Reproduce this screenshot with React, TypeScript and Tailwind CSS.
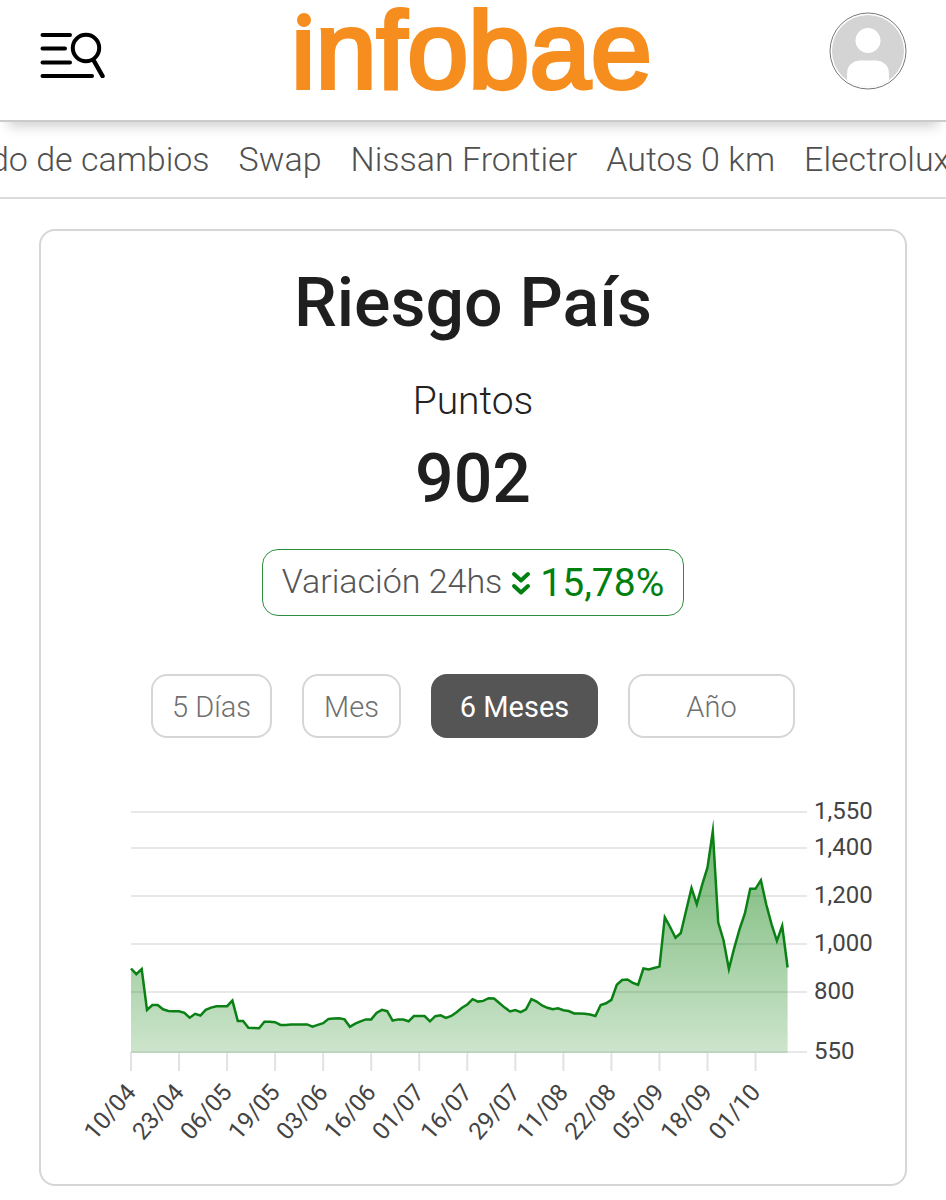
import React, { useState } from 'react';

const topics = ['Mercado de cambios', 'Swap', 'Nissan Frontier', 'Autos 0 km', 'Electrolux'];

const periods = [
    { label: '5 Días', width: 'w-[121px]' },
    { label: 'Mes', width: 'w-[99px]' },
    { label: '6 Meses', width: 'w-[167px]' },
    { label: 'Año', width: 'w-[167px]' },
];

const values = [
    898, 874, 896, 725, 746, 746, 728, 721, 720, 720, 713, 693, 709, 702, 726, 735, 741, 741,
    741, 764, 679, 679, 651, 650, 649, 676, 676, 674, 663, 662, 665, 665, 665, 665, 656, 663,
    670, 688, 689, 691, 686, 655, 668, 678, 686, 686, 713, 726, 720, 681, 686, 685, 678, 700,
    700, 700, 678, 699, 703, 692, 700, 716, 734, 748, 770, 760, 763, 774, 773, 754, 735, 719,
    725, 716, 728, 770, 760, 744, 734, 728, 732, 724, 721, 711, 711, 709, 706, 700, 746, 753,
    767, 830, 850, 852, 838, 830, 898, 894, 900, 906, 1111, 1071, 1026, 1046, 1141, 1233, 1166, 1247,
    1319, 1470, 1090, 1016, 896, 983, 1061, 1127, 1230, 1230, 1266, 1166, 1082, 1013, 1076, 902,
];

// one label every nine sessions
const dates = ['10/04', '23/04', '06/05', '19/05', '03/06', '16/06', '01/07', '16/07', '29/07', '11/08', '22/08', '05/09', '18/09', '01/10'];
const levels = [1550, 1400, 1200, 1000, 800, 550];

const LEFT = 90;
const RIGHT = 766;
const BASE = 262;
const STEP = 5.338;

const xOf = (index: number) => LEFT + index * STEP;
const yOf = (value: number) => BASE - (value - 550) * 0.24;

function MenuSearchIcon() {
    return (
        <svg width="66" height="46" viewBox="0 0 66 46" fill="none" stroke="#000" strokeWidth="4" strokeLinecap="round">
            <path d="M3.500 3H31M3.500 16.500H26M3.500 30.500H31M3.500 44H53" />
            <circle cx="47" cy="16" r="13.200" />
            <path d="M55 29L63.500 44" strokeWidth="4.500" />
        </svg>
    );
}

function Logo() {
    return (
        <svg width="360" height="92" viewBox="0 0 360 92" className="overflow-visible" role="img" aria-label="infobae">
            <text x="-2" y="88" fontFamily="'Liberation Sans', Arial, sans-serif" fontSize="110" fill="#f68e1f" stroke="#f68e1f" strokeWidth="4">infobae</text>
            {/* round dot in place of the square one */}
            <rect x="0" y="0" width="20" height="30" fill="#fff" />
            <circle cx="11" cy="20" r="7" fill="#f68e1f" />
        </svg>
    );
}

function Avatar() {
    return (
        <svg width="78" height="78" viewBox="0 0 78 78">
            <defs>
                <clipPath id="avatar">
                    <circle cx="39" cy="39" r="36" />
                </clipPath>
            </defs>
            <circle cx="39" cy="39" r="38" fill="#fff" stroke="#777" strokeWidth="1" />
            <g clipPath="url(#avatar)">
                <rect width="78" height="78" fill="#d4d4d4" />
                <circle cx="39" cy="28.500" r="12.500" fill="#fff" />
                <path d="M18 78V62C18 53 24 48.500 32 48.500H46C54 48.500 60 53 60 62V78Z" fill="#fff" />
            </g>
        </svg>
    );
}

function RiskChart() {
    const line = values.map((value, i) => `${xOf(i).toFixed(1)},${yOf(value).toFixed(1)}`).join(' L');
    const end = xOf(values.length - 1).toFixed(1);

    return (
        <svg viewBox="0 0 864 394" className="block w-full" fontFamily="Roboto, sans-serif" fontSize="24" fill="#444">
            <defs>
                <linearGradient id="area" x1="0" y1="0" x2="0" y2="1">
                    <stop offset="0" stopColor="#007a00" stopOpacity="0.550" />
                    <stop offset="1" stopColor="#007a00" stopOpacity="0.200" />
                </linearGradient>
            </defs>
            {levels.map((level) => (
                <g key={level}>
                    <path d={`M${LEFT} ${yOf(level)}H${RIGHT}`} stroke="#e8e8e8" strokeWidth="2" />
                    <text x="773" y={yOf(level) + 7}>{level.toLocaleString('en-US')}</text>
                </g>
            ))}
            {dates.map((date, i) => (
                <g key={date}>
                    <path d={`M${xOf(i * 9)} ${BASE}v19`} stroke="#e2e2e2" strokeWidth="2" />
                    <text textAnchor="end" transform={`translate(${xOf(i * 9) + 6} 303) rotate(-49)`}>{date}</text>
                </g>
            ))}
            <path d={`M${line} V${BASE} H${LEFT}Z`} fill="url(#area)" />
            <path d={`M${line}`} fill="none" stroke="#0b8015" strokeWidth="2.500" strokeMiterlimit="20" />
            <path d={`M${LEFT} ${BASE}H${end}`} stroke="#bfd3bf" strokeWidth="2" />
        </svg>
    );
}

export default function App() {
    const [period, setPeriod] = useState('6 Meses');

    return (
        <div className="overflow-hidden bg-white font-['Roboto',sans-serif]">
            <header className="relative flex h-[122px] items-start justify-between border-b-2 border-[#cbcbcb] bg-white px-[39px] shadow-[0_12px_12px_-8px_rgba(0,0,0,0.2)]">
                <button aria-label="Abrir menú" className="mt-8 flex w-[78px]">
                    <MenuSearchIcon />
                </button>
                <a href="#" className="block">
                    <Logo />
                </a>
                <button aria-label="Mi cuenta" className="mt-3">
                    <Avatar />
                </button>
            </header>

            <nav className="border-b-2 border-[#dcdcdc]">
                <ul className="-ml-[104px] flex h-[75px] items-center gap-[29px] whitespace-nowrap text-[34px] font-light text-[#505050]">
                    {topics.map((topic) => (
                        <li key={topic}><a href="#">{topic}</a></li>
                    ))}
                </ul>
            </nav>

            <main className="mx-[39px] mt-[30px] mb-3 rounded-2xl border-2 border-[#d6d6d6] text-center">
                <h1 className="mt-8 text-[68px] leading-[80px] font-medium text-[#1f1f1f]">Riesgo País</h1>
                <p className="mt-9 text-[39px] leading-[44px] font-light text-[#222]">Puntos</p>
                <p className="mt-4 text-[68px] leading-[80px] font-medium text-[#1f1f1f]">902</p>

                <div className="mx-auto mt-[30px] flex h-[67px] w-[422px] items-center justify-center gap-2 rounded-2xl border border-[#2f8f3f]">
                    <span className="pb-1 text-[34px] leading-[40px] font-light text-[#555]">Variación 24hs</span>
                    <svg width="22" height="26" viewBox="0 0 22 26" fill="none" stroke="#008010" strokeWidth="4" strokeLinecap="round" strokeLinejoin="round">
                        <path d="M4 4L11 10.500L18 4M4 16L11 22.500L18 16" />
                    </svg>
                    <span className="text-[39px] leading-[44px] text-[#008010]">15,78%</span>
                </div>

                <div className="mt-[58px] flex justify-center gap-[30px]">
                    {periods.map(({ label, width }) => (
                        <button
                            key={label}
                            onClick={() => setPeriod(label)}
                            className={`h-16 rounded-2xl border-2 pt-1 text-[29px] ${width} ${period === label ? 'border-[#555] bg-[#555] text-white' : 'border-[#d6d6d6] font-light text-[#707070]'}`}
                        >
                            {label}
                        </button>
                    ))}
                </div>

                <div className="mt-[52px]">
                    <RiskChart />
                </div>
            </main>
        </div>
    );
}
